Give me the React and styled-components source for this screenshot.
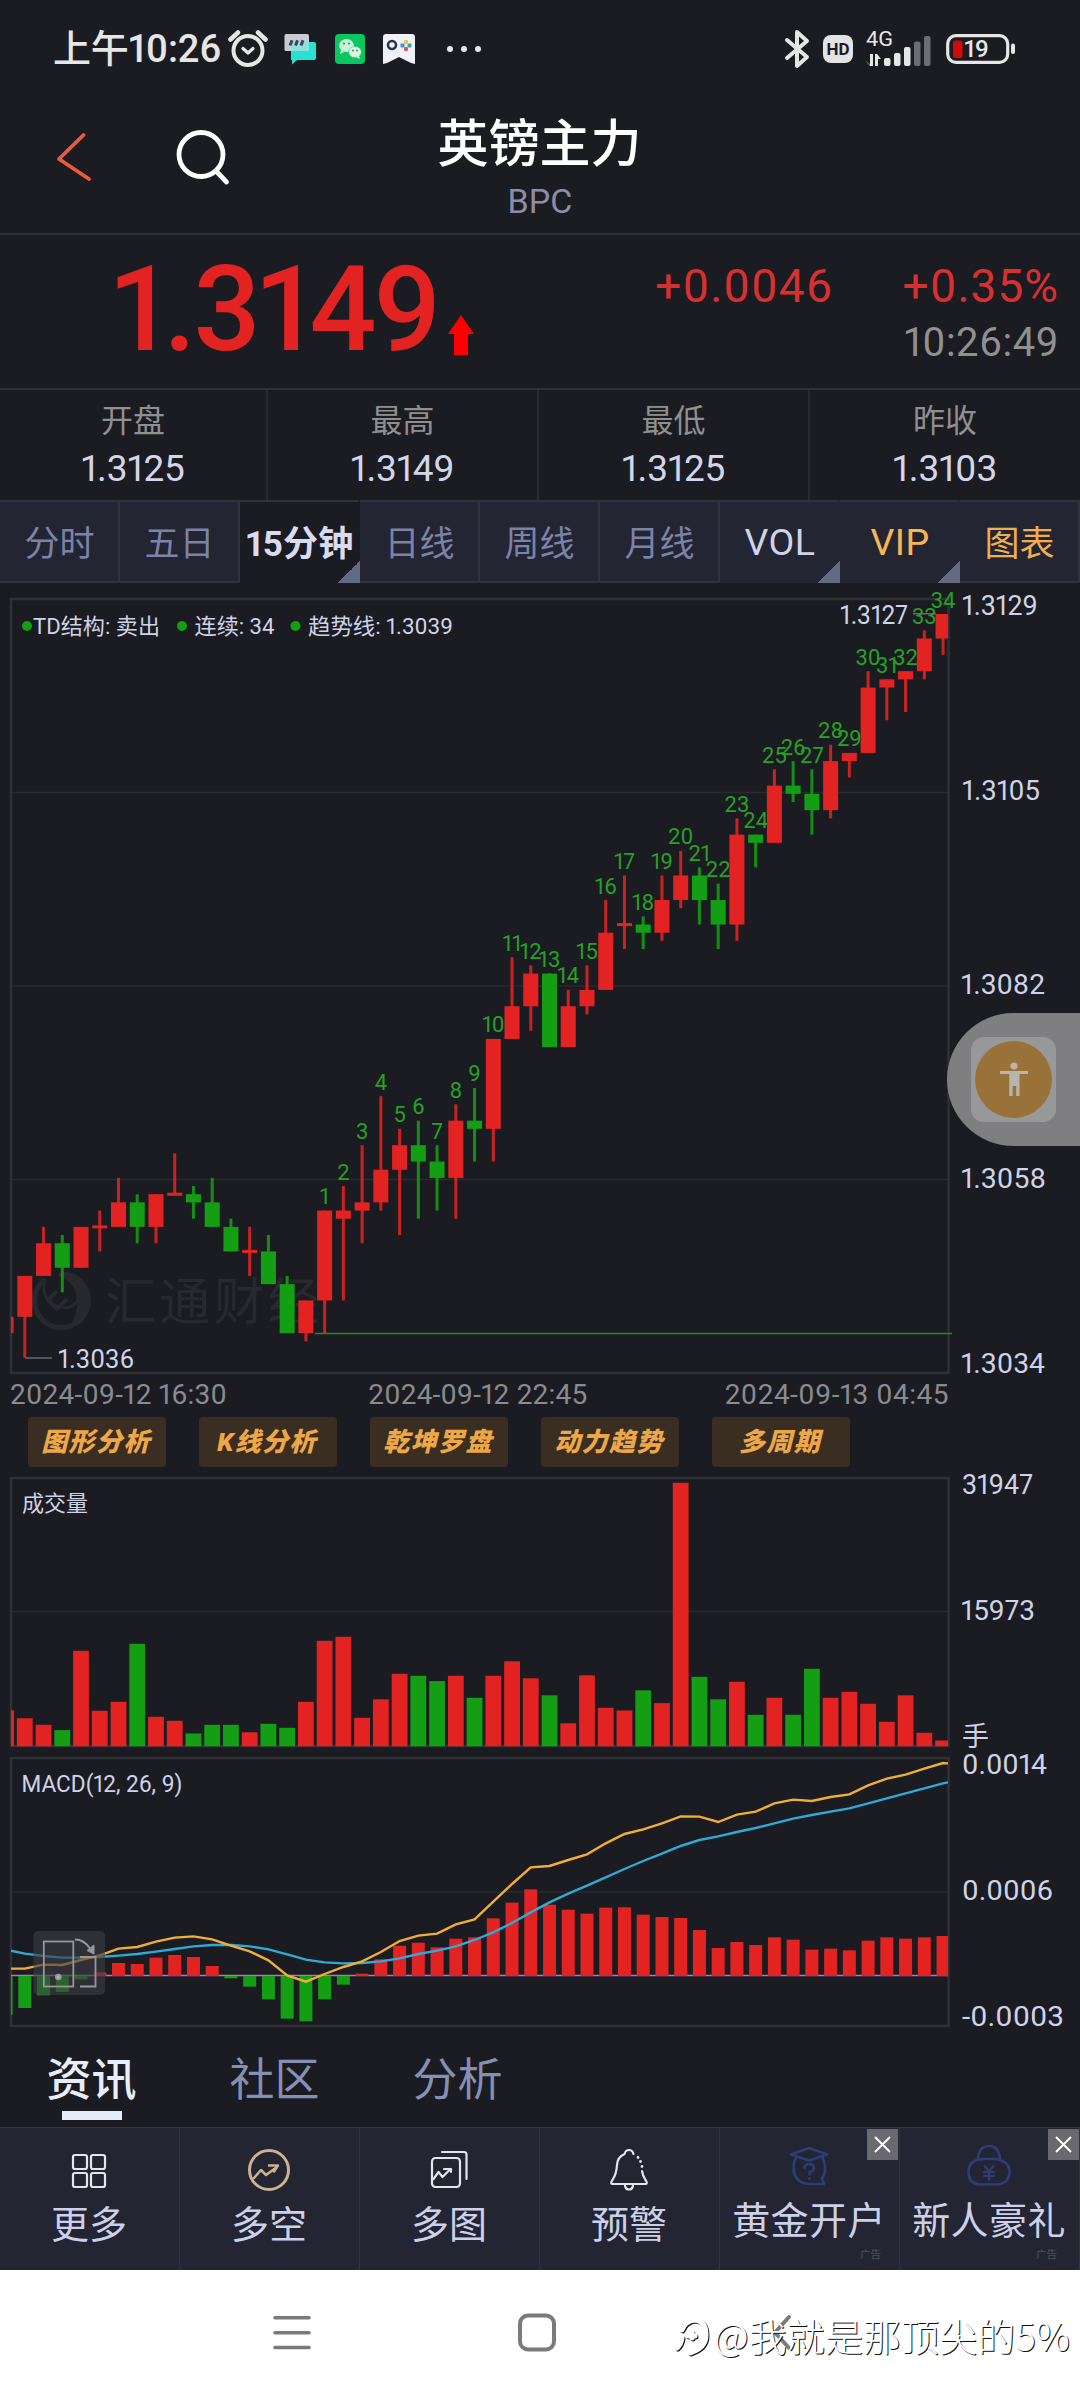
import React from "react";
import styled, { createGlobalStyle, css } from "styled-components";

const FONT = `Roboto, "Noto Sans CJK SC", sans-serif`;
const RED = "#e32322";
const GREEN = "#139e13";
const LINE = "#303137";
const PALE = "#cfd3e8";

const Global = createGlobalStyle`
  *, *::before, *::after { box-sizing: border-box; }
  html, body { margin: 0; padding: 0; background: #1b1c21; }
  svg { display: block; flex: none; overflow: visible; }
`;

const Screen = styled.main`
  position: relative;
  display: flex;
  flex-direction: column;
  width: 1080px;
  height: 2400px;
  overflow: hidden;
  background: #1b1c21;
  color: ${PALE};
  font-family: ${FONT};
  font-feature-settings: "pnum";
`;

/* ---------- status bar ---------- */

const StatusBar = styled.header`
  display: flex;
  align-items: center;
  height: 98px;
  padding: 0 65px 0 53px;
  color: #e6e6e6;
`;

const Clock = styled.span`
  width: 174px;
  font-size: 38px;
  font-weight: 500;
  line-height: 40px;
  letter-spacing: -0.2px;
  white-space: nowrap;
`;

const StatusGroup = styled.div`
  display: flex;
  align-items: center;
  gap: ${(p) => p.$gap}px;
  margin-left: ${(p) => (p.$end ? "auto" : "0")};
`;

function StatusIcons() {
  return (
    <StatusBar>
      <Clock>上午10:26</Clock>
      <StatusGroup $gap={18}>
        <svg width="39" height="40" viewBox="0 0 39 40" fill="none" stroke="#e6e6e6" strokeLinecap="round">
          <circle cx="21" cy="21.500" r="14.500" strokeWidth="4" />
          <path d="M16 19.500l5 4.500 5-4.500" strokeWidth="3.200" strokeLinejoin="round" />
          <path d="M3.500 10.500l7.500-7M38.500 10.500l-7.500-7" strokeWidth="4.500" />
        </svg>
        <svg width="33" height="32" viewBox="0 0 33 32">
          <path d="M7 9h23q2 0 2 2v14q0 2-2 2H13l-5 4.500V27H7z" fill="#25e3d0" />
          <path d="M2 1h21q2 0 2 2v15H2Q.500 18 .500 16.500V3Q.500 1 2 1z" fill="#c9cbd3" />
          <path d="M8 9h17v9H8z" fill="#7be6de" opacity=".8" />
          <path d="M8 7.200l-2 5.300M13.500 7.200l-2 5.300M19 7.200l-2 5.300" stroke="#3d4260" strokeWidth="3" />
        </svg>
        <svg width="30" height="30" viewBox="0 0 30 30">
          <rect width="30" height="30" rx="4" fill="#0ac65f" />
          <ellipse cx="11.500" cy="11.500" rx="7.500" ry="6.500" fill="#c9f3d7" />
          <path d="M6 16l-1 4 4-2z" fill="#c9f3d7" />
          <ellipse cx="20" cy="18" rx="6.300" ry="5.600" fill="#dcf8e5" stroke="#3fce7c" strokeWidth=".6" />
          <path d="M24 22l1 3-4-2z" fill="#dcf8e5" />
          <g fill="#0a9b48">
            <circle cx="9" cy="9.500" r="1" /><circle cx="14" cy="9.500" r="1" />
            <circle cx="18" cy="16.500" r=".9" /><circle cx="22" cy="16.500" r=".9" />
          </g>
        </svg>
        <svg width="32" height="30" viewBox="0 0 32 30">
          <path d="M3 0h26q3 0 3 3v27l-4-1-12-6-12 6-4 1V3q0-3 3-3z" fill="#eef1f9" />
          <circle cx="9" cy="11" r="4" fill="none" stroke="#2c3550" strokeWidth="2.600" />
          <rect x="21" y="6" width="4" height="4" rx="1" fill="#e4ce45" />
          <rect x="17.500" y="9.500" width="4" height="4" rx="1" fill="#4a8fd4" />
          <rect x="24.500" y="9.500" width="4" height="4" rx="1" fill="#38a894" />
          <rect x="21" y="13" width="4" height="4" rx="1" fill="#d45a5a" />
        </svg>
        <svg width="64" height="8" viewBox="0 0 64 8" fill="#e6e6e6">
          <circle cx="17" cy="4" r="3" /><circle cx="31" cy="4" r="3" /><circle cx="45" cy="4" r="3" />
        </svg>
      </StatusGroup>
      <StatusGroup $gap={12} $end>
        <svg width="26" height="42" viewBox="0 0 26 42" fill="none" stroke="#e6e6e6" strokeWidth="4" strokeLinecap="round" strokeLinejoin="round">
          <path d="M2 12l20 17-10 9V4l10 9L2 30" />
        </svg>
        <svg width="30" height="30" viewBox="0 0 30 30">
          <rect y="1" width="30" height="28" rx="8" fill="#e3e3e3" />
          <text x="3.500" y="20.800" fontSize="17" fontWeight="700" fill="#1b1c21" textLength="23" lengthAdjust="spacingAndGlyphs">HD</text>
        </svg>
        <svg width="69" height="48" viewBox="0 -4 69 48" fill="#e6e6e6">
          <text x="1" y="16.500" fontSize="21" textLength="27" lengthAdjust="spacingAndGlyphs">4G</text>
          <path d="M0 31l5 5V25h3v12H5zM10 37V25h2l4 5h-3v7z" />
          <rect x="19" y="29" width="6.500" height="8" rx="2" />
          <rect x="29" y="24" width="6.500" height="13" rx="2" />
          <rect x="39" y="18" width="6.500" height="19" rx="2" />
          <g fill="#6c6d71">
            <rect x="49" y="12.500" width="6.500" height="24.500" rx="2" />
            <rect x="59" y="7" width="6.500" height="30" rx="2" />
          </g>
        </svg>
        <svg width="69" height="30" viewBox="0 0 69 30">
          <rect x="1.700" y="1.700" width="60" height="26.600" rx="8" fill="none" stroke="#e6e6e6" strokeWidth="3.200" />
          <rect x="7" y="6.500" width="9.500" height="17.500" rx="2" fill="#d30a0a" />
          <rect x="65" y="9.500" width="4" height="10.500" rx="2" fill="#e6e6e6" />
          <text x="18" y="23.200" fontSize="23.500" fontWeight="500" fill="#e6e6e6" textLength="25" lengthAdjust="spacingAndGlyphs">19</text>
        </svg>
      </StatusGroup>
    </StatusBar>
  );
}

/* ---------- title bar ---------- */

const TitleBar = styled.div`
  display: grid;
  grid-template-columns: 290px 1fr 290px;
  height: 137px;
  border-bottom: 2px solid ${LINE};
`;

const TitleActions = styled.div`
  display: flex;
  align-items: flex-start;
  gap: 82px;
  padding: 31px 0 0 55px;
`;

const TitleText = styled.div`
  display: flex;
  flex-direction: column;
  align-items: center;
`;

const Name = styled.h1`
  margin: 17px 0 0;
  padding-right: 1px;
  font-size: 51px;
  font-weight: 500;
  line-height: 60px;
  color: #fff;
`;

const Code = styled.span`
  margin-top: 6px;
  font-size: 34px;
  line-height: 40px;
  color: #8b8ea6;
`;

/* ---------- price ---------- */

const PriceBar = styled.section`
  display: flex;
  justify-content: space-between;
  height: 155px;
  padding: 0 21px 0 112px;
  border-bottom: 2px solid ${LINE};
`;

const LastPrice = styled.div`
  display: flex;
  align-items: flex-end;
  gap: 9px;
  height: 120px;
  color: ${RED};
  font-size: 118px;
  font-weight: 500;
  line-height: 90px;
  letter-spacing: -2.7px;
`;

const Changes = styled.div`
  display: grid;
  grid-template-columns: 175px 155px;
  column-gap: 71px;
  align-content: start;
  justify-items: end;
  padding-top: 25px;
`;

const Change = styled.span`
  color: #d83030;
  font-size: 46px;
  line-height: 52px;
  letter-spacing: 1px;
`;

const Time = styled.span`
  grid-column: 2;
  margin-top: 5px;
  color: #909090;
  font-size: 40px;
  line-height: 52px;
  letter-spacing: 0.5px;
`;

const Quotes = styled.section`
  display: grid;
  grid-template-columns: 268px 271px 271px 270px;
  height: 110px;
`;

const Quote = styled.div`
  display: flex;
  flex-direction: column;
  align-items: center;
  padding-top: 12px;
  border-right: 2px solid #292a30;
  &:last-child { border-right: 0; }
`;

const QuoteLabel = styled.span`
  color: #8f8f8f;
  font-size: 32px;
  line-height: 38px;
`;

const QuoteValue = styled.span`
  margin-top: 8px;
  color: #d3d6ea;
  font-size: 37px;
  line-height: 42px;
  letter-spacing: -0.1px;
`;

/* ---------- period tabs ---------- */

const Periods = styled.nav`
  display: grid;
  grid-template-columns: repeat(9, 120px);
  height: 83px;
`;

const Period = styled.button`
  display: flex;
  align-items: center;
  justify-content: center;
  padding: ${(p) => (p.$latin ? "1px 0 0 2px" : "0 0 3px 1px")};
  border: solid #30323c;
  border-width: 2px 2px 2px 0;
  background: #232532;
  color: ${(p) => p.$color || "#7b83a8"};
  font-family: ${FONT};
  font-size: ${(p) => (p.$latin ? 37.5 : 35)}px;
  font-feature-settings: "pnum";
  letter-spacing: ${(p) => (p.$latin ? 0.5 : 0)}px;
  white-space: nowrap;
  ${(p) => p.$menu && css`
    background: linear-gradient(135deg, transparent 50%, #646a82 50%) right bottom / 22px 22px no-repeat border-box, #232532;
    background-origin: border-box;
    border-right-color: transparent;
    border-bottom-color: transparent;
  `}
  ${(p) => p.$active && css`
    background-color: #1b1c21;
    color: #d9dcf0;
    font-weight: 700;
    letter-spacing: 0.2px;
    border-top-color: #30323c;
  `}
`;

const PERIODS = [
  { label: "分时" },
  { label: "五日" },
  { label: "15分钟", active: true, menu: true },
  { label: "日线" },
  { label: "周线" },
  { label: "月线" },
  { label: "VOL", color: "#cfd3e8", menu: true, latin: true },
  { label: "VIP", color: "#f7b655", menu: true, latin: true },
  { label: "图表", color: "#f0ae52" },
];

/* ---------- charts ---------- */

const STEP = 18.74;
const X0 = 24.8;
const cx = (i) => X0 + STEP * i;
const py = (tick) => 614 + tick * 8.172;

/* colour, high, body top, body bottom, low; in ticks below the top price */
const CANDLES = [
  ["r", 86, 86, 88, 88], ["r", 81, 81, 86, 91], ["r", 75, 77, 81, 81], ["g", 76, 77, 80, 83],
  ["r", 75, 75, 80, 80], ["r", 73, 75, 75, 78], ["r", 69, 72, 75, 75], ["g", 71, 72, 75, 77],
  ["r", 71, 71, 75, 77], ["r", 66, 71, 71, 71], ["g", 70, 71, 72, 74], ["g", 69, 72, 75, 75],
  ["g", 74, 75, 78, 78], ["r", 75, 78, 78, 81], ["g", 76, 78, 82, 82], ["g", 81, 82, 88, 88],
  ["r", 84, 84, 88, 89], ["r", 73, 73, 84, 88], ["r", 70, 73, 74, 84], ["r", 65, 72, 73, 77],
  ["r", 59, 68, 72, 73], ["r", 63, 65, 68, 76], ["g", 62, 65, 67, 74], ["g", 65, 67, 69, 73],
  ["r", 60, 62, 69, 74], ["g", 58, 62, 63, 67], ["r", 52, 52, 63, 67], ["r", 42, 48, 52, 52],
  ["r", 43, 44, 48, 51], ["g", 44, 44, 53, 53], ["r", 46, 48, 53, 53], ["r", 43, 46, 48, 49],
  ["r", 35, 39, 46, 46], ["r", 32, 38, 38, 41], ["g", 37, 38, 39, 41], ["r", 32, 35, 39, 40],
  ["r", 29, 32, 35, 36], ["g", 31, 32, 35, 38], ["g", 33, 35, 38, 41], ["r", 25, 27, 38, 40],
  ["g", 27, 27, 28, 31], ["r", 19, 21, 28, 28], ["g", 18, 21, 22, 23], ["g", 19, 22, 24, 27],
  ["r", 16, 18, 24, 25], ["r", 17, 17, 18, 20], ["r", 7, 9, 17, 17], ["r", 8, 8, 9, 13],
  ["r", 7, 7, 8, 12], ["r", 2, 3, 7, 8], ["r", 0, 0, 3, 5],
];

const VOLUME = [
  36, 28, 21.5, 16.2, 95.5, 35.5, 44.5, 102.5, 29.5, 25.5, 12.8, 21.5, 21.5, 14, 22.5, 18.5,
  44.5, 105.5, 109.5, 28.5, 47, 72.5, 70.5, 65.2, 70.5, 48.5, 70.5, 85, 68, 51, 23, 71, 38.5, 35.8,
  56, 43.2, 263.5, 69.5, 47, 64.5, 31.5, 48.5, 31.5, 77.5, 48.5, 54.5, 42.5, 24.5, 51, 13.5, 5.8,
];

/* histogram heights, in thirds of a pixel above (+) or below (-) the zero line */
const MACD = [
  -116, -96, -58, -48, -10, 11, 39, 36, 55, 63, 57, 30, -7, -32, -70, -128, -136, -70, -26, 7, 50,
  91, 100, 86, 112, 116, 173, 220, 260, 214, 199, 187, 205, 206, 184, 177, 174, 138, 84, 102, 93,
  116, 109, 79, 82, 77, 106, 116, 112, 116, 120,
];
const DIF = [
  686, 674, 675, 660, 646, 626, 621, 605, 593, 589, 598, 617, 634, 661, 706, 725, 702, 681, 664, 636,
  603, 587, 581, 553, 538, 485, 432, 382, 378, 360, 343, 310, 282, 268, 250, 229, 230, 246, 224, 215,
  190, 179, 183, 171, 163, 136, 116, 104, 86, 69,
];
const DEA = [
  641, 648, 653, 653, 651, 647, 642, 635, 627, 619, 615, 615, 619, 628, 643, 659, 667, 670, 669, 664,
  655, 642, 632, 619, 600, 577, 549, 517, 487, 461, 437, 412, 387, 363, 341, 318, 300, 289, 276, 264,
  250, 236, 225, 215, 205, 190, 175, 160, 145, 130,
];
const curve = (start, list, end) =>
  [`11,${1740 + start / 3}`, ...list.map((v, i) => `${cx(i)},${1740 + v / 3}`), `948,${1740 + end / 3}`].join(" ");

const Plot = styled.svg`
  width: 1080px;
  height: ${(p) => p.$height}px;
  font-family: ${FONT};
`;
const Frame = styled.rect`
  fill: none;
  stroke: #303137;
  stroke-width: 2.5px;
`;
const Grid = styled.path`
  fill: none;
  stroke: #292a2f;
  stroke-width: 1.5px;
`;
const AxisText = styled.text`
  fill: ${PALE};
  font-size: ${(p) => p.$size || 28}px;
`;
const CountText = styled.text`
  fill: #28a028;
  font-size: 22px;
  text-anchor: middle;
`;

function Axis({ x = 963, y, w, size, children }) {
  return (
    <AxisText x={x} y={y} $size={size} textLength={w} lengthAdjust="spacingAndGlyphs">
      {children}
    </AxisText>
  );
}

function Candle({ index, data }) {
  const [tone, high, top, bottom, low] = data;
  const color = tone === "r" ? RED : GREEN;
  const x = cx(index);
  const doji = top === bottom;
  return (
    <g fill={color}>
      <rect x={x - 1.5} y={py(high)} width="3" height={(low - high) * 8.172} opacity=".88" />
      <rect x={x - 7.5} y={py(top) - (doji ? 1.5 : 0)} width="15" height={doji ? 3 : (bottom - top) * 8.172} />
    </g>
  );
}

function PriceChart() {
  return (
    <Plot $height={799} viewBox="0 583 1080 799">
      <defs><clipPath id="price"><rect x="11" y="583" width="937" height="799" /></clipPath></defs>
      <g fill="none" stroke="#28292f">
        <path d="M44 1280a27 27 0 1 0 36 1" strokeWidth="5" />
        <path d="M45 1279q-5 18 10 26 18 8 24-8" strokeWidth="3" />
        <path d="M60 1272q22-1 28 18 3 22-16 33 8-15 4-30-5-14-18-17z" fill="#28292f" stroke="none" />
        <path d="M57 1291l-9 9 9 9 10-10" strokeWidth="4" />
      </g>
      <text x="105" y="1320" fontSize="51" fill="#28292f" textLength="214">汇通财经</text>
      <Grid d="M11 792.500H948M11 986H948M11 1179.500H948" />
      <Frame x="11" y="599" width="937.500" height="774" />
      <path d="M315 1333.500H952" stroke="#28862b" strokeWidth="1.600" />
      <path d="M25 1358H52M913 613.700H936" stroke="#66686d" strokeWidth="1.500" />
      <g clipPath="url(#price)">
        {CANDLES.map((c, i) => <Candle key={i} index={i - 1} data={c} />)}
      </g>
      {CANDLES.slice(17).map((c, i) => (
        <CountText key={i} x={cx(i + 16)} y={py(c[1]) - 6.5}>{i + 1}</CountText>
      ))}
      <g fill={GREEN}>
        <circle cx="27" cy="626" r="5" /><circle cx="182" cy="626" r="5" /><circle cx="295.500" cy="626" r="5" />
      </g>
      <Axis x={33} y={633.500} w={127} size={22}>TD结构: 卖出</Axis>
      <Axis x={194.500} y={633.500} w={80} size={22}>连续: 34</Axis>
      <Axis x={308} y={633.500} w={145} size={22}>趋势线: 1.3039</Axis>
      <Axis x={840} y={623.700} w={68} size={25}>1.3127</Axis>
      <Axis x={58} y={1367.500} w={76} size={25}>1.3036</Axis>
      <Axis x={962} y={615} w={76}>1.3129</Axis>
      <Axis x={962} y={799.700} w={78}>1.3105</Axis>
      <Axis x={961} y={993.700} w={84}>1.3082</Axis>
      <Axis x={961} y={1187.500} w={85}>1.3058</Axis>
      <Axis x={961} y={1372.500} w={84}>1.3034</Axis>
    </Plot>
  );
}

function VolumeChart() {
  return (
    <Plot $height={280} viewBox="0 1467 1080 280">
      <defs><clipPath id="volume"><rect x="11" y="1467" width="937" height="285" /></clipPath></defs>
      <Grid d="M11 1611.500H948" />
      <Frame x="11" y="1478" width="937.500" height="268" />
      <g clipPath="url(#volume)">
        {VOLUME.map((v, i) => (
          <rect key={i} x={cx(i - 1) - 7.9} y={1746.3 - v} width="15.800" height={v}
            fill={CANDLES[i][0] === "g" ? GREEN : RED} />
        ))}
      </g>
      <Axis x={22} y={1511} w={66} size={22}>成交量</Axis>
      <Axis x={962} y={1494} w={71}>31947</Axis>
      <Axis x={961} y={1620} w={74}>15973</Axis>
      <Axis x={962} y={1746} w={27} size={27}>手</Axis>
    </Plot>
  );
}

function MacdChart() {
  return (
    <Plot $height={285} viewBox="0 1747 1080 285">
      <defs><clipPath id="macd"><rect x="11" y="1752" width="937" height="280" /></clipPath></defs>
      <Grid d="M11 1892H948" />
      <Frame x="11" y="1758" width="937.500" height="268" />
      <g clipPath="url(#macd)">
        <path d="M11 1975.400H948" stroke="#c272b4" strokeWidth="1.500" />
        {MACD.map((v, i) => {
          const h = Math.abs(v) / 3;
          return (
            <rect key={i} x={cx(i - 1) - 6.5} y={v > 0 ? 1976 - h : 1976} width="13" height={Math.max(h, 1.5)}
              fill={v > 0 ? RED : GREEN} />
          );
        })}
        <polyline points={curve(632, DEA, 127)} fill="none" stroke="#30a9d6" strokeWidth="2.400" />
        <polyline points={curve(686, DIF, 70)} fill="none" stroke="#efae37" strokeWidth="2.400" />
      </g>
      <rect x="33.500" y="1931" width="71.500" height="64" rx="5" fill="#3c3d42" opacity=".62" />
      <g fill="none" stroke="#97979a" strokeWidth="1.800">
        <rect x="43.800" y="1941.500" width="29.500" height="45" />
        <path d="M80 1957h15.500v29.500H80M75 1939.500q9 0 15 9" />
        <path d="M87 1950.500l7-5.500v9z" fill="#97979a" strokeWidth="1" />
        <circle cx="58.300" cy="1977" r="2.400" fill="#b5b5b7" />
      </g>
      <Axis x={21.500} y={1791.500} w={161} size={23}>MACD(12, 26, 9)</Axis>
      <Axis x={962} y={1773.700} w={85}>0.0014</Axis>
      <Axis x={962} y={1900} w={91}>0.0006</Axis>
      <Axis x={962} y={2025.500} w={102}>-0.0003</Axis>
    </Plot>
  );
}

const Dates = styled.div`
  display: flex;
  justify-content: space-between;
  height: 35px;
  padding: 0 131px 0 10px;
  color: #8a8b90;
  font-size: 28px;
  line-height: 26px;
`;
const DateText = styled.span`
  letter-spacing: ${(p) => p.$spacing}px;
  margin-right: ${(p) => p.$shift || 0}px;
`;

const Tools = styled.div`
  display: flex;
  gap: 33px;
  height: 50px;
  padding-left: 28px;
`;
const Tool = styled.button`
  width: 138px;
  height: 50px;
  padding: 0 2px 0 0;
  border: 0;
  border-radius: 4px;
  background: #3a2e23;
  color: #eda746;
  font: italic 900 26px/49px ${FONT};
  letter-spacing: 1.4px;
`;

/* ---------- bottom ---------- */

const NewsTabs = styled.nav`
  display: flex;
  gap: 92px;
  height: 95px;
  padding: 23px 0 0 46px;
`;
const NewsTab = styled.button`
  display: flex;
  flex-direction: column;
  align-items: center;
  gap: 4px;
  width: 91px;
  padding: 0;
  border: 0;
  background: none;
  color: ${(p) => (p.$active ? "#e7eefa" : "#868fb4")};
  font: ${(p) => (p.$active ? 500 : 400)} 45px/52px ${FONT};
  &::after {
    content: "";
    width: 60px;
    height: 9px;
    background: ${(p) => (p.$active ? "#e4ecf8" : "transparent")};
  }
`;

const Toolbar = styled.nav`
  display: grid;
  grid-template-columns: repeat(6, 180px);
  height: 143px;
  border-top: 1px solid #32343e;
  background: #232532;
`;
const Action = styled.button`
  position: relative;
  display: flex;
  flex-direction: column;
  align-items: center;
  gap: ${(p) => (p.$ad ? 8 : 9)}px;
  padding: ${(p) => (p.$ad ? "15px 1px 0 0" : "18px 1px 0 0")};
  border: 0;
  border-right: 1px solid #30323e;
  background: none;
  color: #ccd0e8;
  font: 400 38px/48px ${FONT};
  letter-spacing: ${(p) => (p.$ad ? 0.4 : 0)}px;
  white-space: nowrap;
`;
const Close = styled.span`
  position: absolute;
  top: 1px;
  right: ${(p) => p.$right || 0}px;
  display: grid;
  place-items: center;
  width: 31px;
  height: 31px;
  background: #69696f;
`;
const AdMark = styled.small`
  position: absolute;
  right: ${(p) => p.$right}px;
  bottom: 7px;
  color: #50535f;
  font-size: 10.5px;
  line-height: 16px;
  letter-spacing: 0;
`;

const Icon = ({ children, color = "#e2e4ee", width = 2.2 }) => (
  <svg width="50" height="46" viewBox="0 0 50 46" fill="none" stroke={color} strokeWidth={width}
    strokeLinecap="round" strokeLinejoin="round">{children}</svg>
);

const Cross = () => (
  <svg width="17" height="17" viewBox="0 0 17 17" stroke="#fff" strokeWidth="1.900"><path d="M1 1l15 15M16 1L1 16" /></svg>
);

const SystemNav = styled.footer`
  position: relative;
  display: flex;
  align-items: center;
  height: 130px;
  padding-left: 271px;
  gap: 203px;
  background: #fff;
`;
const Signature = styled.div`
  position: absolute;
  left: 673px;
  top: 41px;
  display: flex;
  align-items: center;
  color: #fff;
  font: 300 38px/48px "Noto Sans CJK SC", sans-serif;
  letter-spacing: 0.1px;
  white-space: nowrap;
  text-shadow: 1px 1px 0.5px #111;
  svg { margin-right: 3px; filter: drop-shadow(1px 1px 0.5px #111); }
`;

const FloatButton = styled.button`
  position: absolute;
  top: 1013px;
  right: 0;
  display: flex;
  align-items: center;
  width: 133px;
  height: 133px;
  padding: 0 0 0 24px;
  border: 0;
  border-radius: 67px 0 0 67px;
  background: #7f7f81;
`;
const FloatTile = styled.span`
  display: grid;
  place-items: center;
  width: 85px;
  height: 85px;
  border-radius: 13px;
  background: #979999;
`;
const FloatDisc = styled.span`
  display: grid;
  place-items: center;
  width: 77px;
  height: 77px;
  border-radius: 50%;
  background: #99723a;
`;

export default function App() {
  return (
    <>
      <Global />
      <Screen>
        <StatusIcons />
        <TitleBar>
          <TitleActions>
            <svg width="36" height="56" viewBox="0 0 36 56" fill="none" stroke="#ea5a3c" strokeWidth="3.800" strokeLinecap="round" strokeLinejoin="round">
              <path d="M28.500 6L4 30l30 20" />
            </svg>
            <svg width="58" height="58" viewBox="0 0 58 58" fill="none" stroke="#fff" strokeWidth="4.800" strokeLinecap="round">
              <circle cx="28" cy="25.500" r="22" /><path d="M43 42l10.500 11" />
            </svg>
          </TitleActions>
          <TitleText>
            <Name>英镑主力</Name>
            <Code>BPC</Code>
          </TitleText>
        </TitleBar>
        <PriceBar>
          <LastPrice>
            1.3149
            <svg width="26" height="40" viewBox="0 0 26 40" fill="#ff0000"><path d="M13 0l13 19h-6v21H6V19H0z" /></svg>
          </LastPrice>
          <Changes>
            <Change>+0.0046</Change>
            <Change>+0.35%</Change>
            <Time>10:26:49</Time>
          </Changes>
        </PriceBar>
        <Quotes>
          {[["开盘", "1.3125"], ["最高", "1.3149"], ["最低", "1.3125"], ["昨收", "1.3103"]].map(([label, value]) => (
            <Quote key={label}>
              <QuoteLabel>{label}</QuoteLabel>
              <QuoteValue>{value}</QuoteValue>
            </Quote>
          ))}
        </Quotes>
        <Periods>
          {PERIODS.map((p) => (
            <Period key={p.label} $active={p.active} $menu={p.menu} $color={p.color} $latin={p.latin}>{p.label}</Period>
          ))}
        </Periods>
        <PriceChart />
        <Dates>
          <DateText $spacing={0.25}>2024-09-12 16:30</DateText>
          <DateText $spacing={0.2} $shift={-4}>2024-09-12 22:45</DateText>
          <DateText $spacing={0.5}>2024-09-13 04:45</DateText>
        </Dates>
        <Tools>
          {["图形分析", "K线分析", "乾坤罗盘", "动力趋势", "多周期"].map((t) => <Tool key={t}>{t}</Tool>)}
        </Tools>
        <VolumeChart />
        <MacdChart />
        <NewsTabs>
          <NewsTab $active>资讯</NewsTab>
          <NewsTab>社区</NewsTab>
          <NewsTab>分析</NewsTab>
        </NewsTabs>
        <Toolbar>
          <Action>
            <Icon>
              <rect x="9" y="9" width="14" height="14" rx="2" /><rect x="27" y="9" width="14" height="14" rx="2" />
              <rect x="9" y="27" width="14" height="14" rx="2" /><rect x="27" y="27" width="14" height="14" rx="2" />
            </Icon>
            更多
          </Action>
          <Action>
            <Icon color="#ccb190" width={3}>
              <circle cx="25" cy="24" r="19.500" />
              <path d="M10 32l7-8 5 5 11-8M25 19.500h9l-4 6" strokeWidth="2.500" />
            </Icon>
            多空
          </Action>
          <Action>
            <Icon>
              <path d="M18 6h22q2.500 0 2.500 2.500V33" />
              <rect x="8" y="12" width="28" height="29" rx="3.500" />
              <path d="M9.500 33l5-7 4 5 8-8M20 23h7v3" />
            </Icon>
            多图
          </Action>
          <Action>
            <Icon>
              <path d="M29.500 8q-1-4-4.500-4t-4.500 4q-7 3-7.500 11-.5 9-4.500 15-3 4 .5 4h32q3.500 0 .5-4-3-5-3.500-9M21 39.500q.5 4 4 4t4-4" />
              <path d="M34 11.500v.1M36.500 15.500v.1M38 20.500v.1" strokeWidth="2.800" />
            </Icon>
            预警
          </Action>
          <Action $ad>
            <Icon color="#2b3e78" width={2.6}>
              <path d="M25 5l18 6.500-18 6-18-6z" />
              <path d="M12 15q-2.500 4-2.500 9 0 16 15.500 17h15l-2-5.500q3.500-5 3-12-.3-5-2.500-8.500" />
              <path d="M20.500 25q.5-4 4.800-4t4.700 3.700q0 3-4.500 4.600v2M25.500 35.500v.2" />
            </Icon>
            黄金开户
            <Close $right={1}><Cross /></Close>
            <AdMark $right={18}>广告</AdMark>
          </Action>
          <Action $ad>
            <Icon color="#2b3e78" width={2.6}>
              <path d="M14 16Q15 3 25 3t11 13" />
              <path d="M19 16h12q14.500 2 14.500 13T34 41.500H16Q4.500 41 4.500 29T19 16z" />
              <path d="M20.500 23l4.500 5.500 4.500-5.500M25 28.500V37M20 29h10M20 33h10" strokeWidth="2.200" />
            </Icon>
            新人豪礼
            <Close><Cross /></Close>
            <AdMark $right={22}>广告</AdMark>
          </Action>
        </Toolbar>
        <SystemNav>
          <svg width="42" height="42" viewBox="0 0 42 42" stroke="#7b7b7b" strokeWidth="3.600" strokeLinecap="round">
            <path d="M4 3.800h34M4 18.800h34M4 33.500h34" />
          </svg>
          <svg width="42" height="42" viewBox="0 0 42 42" fill="none" stroke="#7b7b7b" strokeWidth="4">
            <rect x="4" y="1.500" width="34" height="34" rx="8" />
          </svg>
          <svg width="42" height="42" viewBox="0 0 42 42" fill="none" stroke="#7b7b7b" strokeWidth="4" strokeLinecap="round" strokeLinejoin="round">
            <path d="M28 3L14 18.500 28 34" />
          </svg>
          <Signature>
            <svg width="38" height="46" viewBox="0 0 38 46" fill="none" stroke="#fff" strokeWidth="5" strokeLinecap="round">
              <path d="M4 36q4-3 5-10M9 18q3-9 13-10 11 1 11 15 0 13-16 18M15 24h7M19 21v5" />
            </svg>
            @我就是那顶尖的5%
          </Signature>
        </SystemNav>
        <FloatButton>
          <FloatTile>
            <FloatDisc>
              <svg width="30" height="36" viewBox="0 0 30 36" fill="#b9b4ad">
                <circle cx="15" cy="4" r="3.500" />
                <path d="M1 9h28v3h-8.500v22h-3.300V24h-3.600v10h-3.300V12H1z" />
              </svg>
            </FloatDisc>
          </FloatTile>
        </FloatButton>
      </Screen>
    </>
  );
}
